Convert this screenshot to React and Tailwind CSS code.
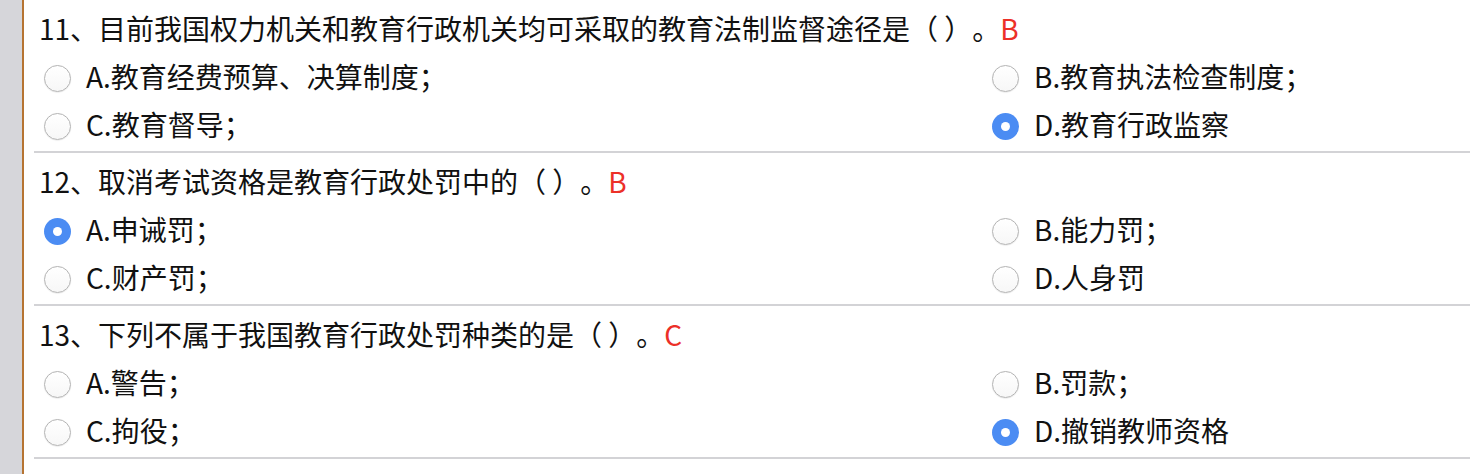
import React from "react";

const questions = [
  {
    title: "11、目前我国权力机关和教育行政机关均可采取的教育法制监督途径是（ ）。",
    answer: "B",
    options: ["A.教育经费预算、决算制度；", "B.教育执法检查制度；", "C.教育督导；", "D.教育行政监察"],
    checked: 3,
  },
  {
    title: "12、取消考试资格是教育行政处罚中的（ ）。",
    answer: "B",
    options: ["A.申诫罚；", "B.能力罚；", "C.财产罚；", "D.人身罚"],
    checked: 0,
  },
  {
    title: "13、下列不属于我国教育行政处罚种类的是（ ）。",
    answer: "C",
    options: ["A.警告；", "B.罚款；", "C.拘役；", "D.撤销教师资格"],
    checked: 3,
  },
];

function Radio({ checked }) {
  if (checked) {
    return (
      <span className="flex h-[27px] w-[27px] shrink-0 items-center justify-center rounded-full bg-[#4b8cf3]">
        <span className="h-[9px] w-[9px] rounded-full bg-white" />
      </span>
    );
  }
  return (
    <span className="h-[27px] w-[27px] shrink-0 rounded-full border border-[#b4b4b4] bg-gradient-to-b from-white to-[#f7f7f7] shadow-[0_0.5px_1px_rgba(0,0,0,0.12)]" />
  );
}

function Option({ text, checked }) {
  return (
    <div className="flex h-[48px] items-center gap-[15px] pl-[10px]">
      <Radio checked={checked} />
      <span className="relative -top-[2px]">{text}</span>
    </div>
  );
}

export default function App() {
  return (
    <div
      className="flex h-[474px] w-[1470px] overflow-hidden bg-white text-[28px] text-[#111] [text-spacing-trim:space-all]"
      style={{ fontFamily: '"Noto Sans CJK SC", "Noto Sans", sans-serif' }}
    >
      <div className="w-[22px] shrink-0 bg-[#d6d6da]" />
      <div className="w-[2px] shrink-0 bg-[#b67432]" />
      <div className="flex-1 pl-[10px]">
        {questions.map((q, i) => (
          <div key={i} className="border-b-2 border-[#d3d3d6] pt-[6px] pb-[1px]">
            <div className="flex h-[48px] items-center pl-[5px]">
              <span className="relative -top-[2px]">{q.title}</span>
              <span className="relative -top-[2px] text-[#ec3028]">{q.answer}</span>
            </div>
            <div className="grid grid-cols-[948px_1fr]">
              {q.options.map((o, j) => (
                <Option key={j} text={o} checked={q.checked === j} />
              ))}
            </div>
          </div>
        ))}
      </div>
    </div>
  );
}
